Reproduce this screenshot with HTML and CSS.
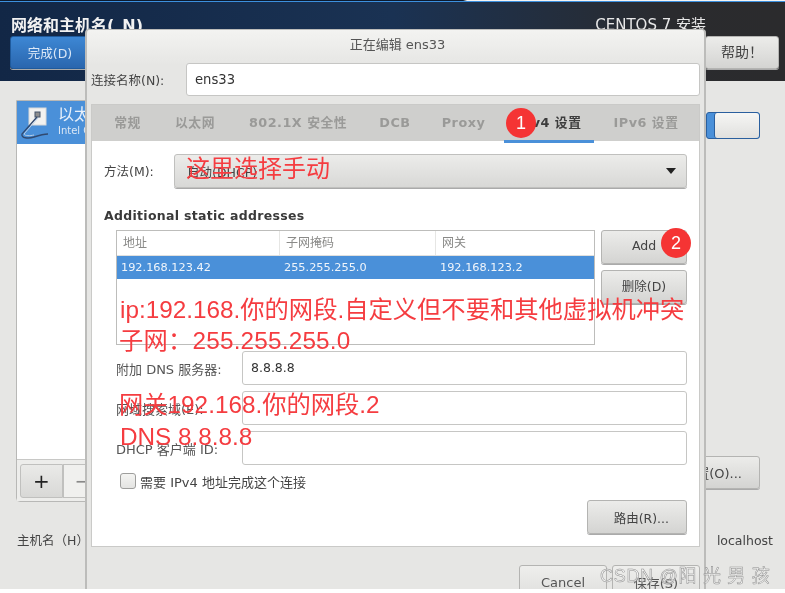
FILE: index.html
```html
<!DOCTYPE html>
<html lang="zh">
<head>
<meta charset="utf-8">
<title>网络和主机名</title>
<link rel="stylesheet" href="styles.css">
</head>
<body>
<div class="app">
  <header class="topbar">
    <div class="topbar-col">
      <div class="title">网络和主机名(_N)</div>
      <button class="btn btn-primary">完成(D)</button>
    </div>
    <div class="topbar-col topbar-right">
      <div class="product">CENTOS 7 安装</div>
      <button class="btn btn-help">帮助！</button>
    </div>
  </header>

  <main class="page">
    <section class="devices">
      <div class="device-list">
        <div class="device-row">
          <svg class="device-icon" width="36" height="36" viewBox="0 0 36 36">
            <rect x="9" y="1" width="17" height="17" fill="#f2f2f0" stroke="#d8d8d8"/>
            <rect x="15" y="5" width="5" height="5" fill="#8d8d8d" stroke="#44546a" stroke-width="1"/>
            <path d="M17 10 L2 27 C1 31 8 32 14 30 C20 28 24 27 28 27" fill="none" stroke="#31496f" stroke-width="1.4"/>
            <path d="M18 11 L4 27 C5 29 10 29 14 28" fill="none" stroke="#b9cfe8" stroke-width="1"/>
          </svg>
          <div class="device-text">
            <div class="device-name">以太网 (ens33)</div>
            <div class="device-sub">Intel Corporation</div>
          </div>
        </div>
      </div>
      <div class="device-tools">
        <button class="tool tool-add">+</button>
        <button class="tool tool-remove">−</button>
      </div>
    </section>
    <section class="details">
      <div class="toggle"><span class="toggle-knob"></span></div>
      <button class="btn btn-config">配置(O)...</button>
    </section>
    <footer class="hostbar">
      <span>主机名（H）</span>
      <span class="hostname">localhost</span>
    </footer>
  </main>

  <div class="dialog">
    <div class="dialog-title">正在编辑 ens33</div>
    <div class="name-row">
      <label class="name-label">连接名称(N):</label>
      <div class="entry entry-name">ens33</div>
    </div>
    <div class="notebook">
      <div class="tabs">
        <div class="tab">常规</div>
        <div class="tab">以太网</div>
        <div class="tab">802.1X 安全性</div>
        <div class="tab">DCB</div>
        <div class="tab">Proxy</div>
        <div class="tab tab-active">IPv4 设置</div>
        <div class="tab">IPv6 设置</div>
      </div>
      <div class="tab-body">
        <div class="method-row">
          <span class="method-label">方法(M):</span>
          <div class="combo"><span>自动(DHCP)</span><i class="caret"></i></div>
        </div>
        <div class="section-title">Additional static addresses</div>
        <div class="addr-row">
          <div class="addr-table">
            <div class="addr-head">
              <span>地址</span><span>子网掩码</span><span>网关</span>
            </div>
            <div class="addr-sel">
              <span>192.168.123.42</span><span>255.255.255.0</span><span>192.168.123.2</span>
            </div>
          </div>
          <div class="addr-actions">
            <button class="btn btn-side">Add</button>
            <button class="btn btn-side">删除(D)</button>
          </div>
        </div>
        <div class="form-rows">
          <div class="form-row"><label>附加 DNS 服务器:</label><div class="entry">8.8.8.8</div></div>
          <div class="form-row"><label>网域搜索域(E):</label><div class="entry"></div></div>
          <div class="form-row"><label>DHCP 客户端 ID:</label><div class="entry"></div></div>
        </div>
        <div class="check-row"><span class="checkbox"></span><span>需要 IPv4 地址完成这个连接</span></div>
        <div class="route-row"><button class="btn btn-route">路由(R)...</button></div>
      </div>
    </div>
    <div class="dialog-actions">
      <button class="btn btn-cancel">Cancel</button>
      <button class="btn btn-save">保存(S)</button>
    </div>
  </div>

  <div class="note note-method">这里选择手动</div>
  <div class="note note-ip">ip:192.168.你的网段.自定义但不要和其他虚拟机冲突</div>
  <div class="note note-mask">子网：255.255.255.0</div>
  <div class="note note-gw">网关192.168.你的网段.2</div>
  <div class="note note-dns">DNS 8.8.8.8</div>
  <div class="badge badge-one">1</div>
  <div class="badge badge-two">2</div>
  <div class="watermark">CSDN @阳 光 男 孩</div>
</div>
</body>
</html>
```
FILE: styles.css
```css
* { box-sizing: border-box; }
html, body { margin: 0; padding: 0; background: #fff; }
body { width: 785px; height: 593px; overflow: hidden; }
.app {
  position: relative;
  width: 785px;
  height: 589px;
  overflow: hidden;
  padding-top: 1px;
  background: linear-gradient(90deg, #0c1a2e 59%, #f4f4f4 59.5%);
  font: 13px "DejaVu Sans", "Noto Sans CJK SC", sans-serif;
  color: #3a3a3a;
  filter: blur(.55px);
}
button { font: inherit; color: inherit; padding: 0; }

.btn {
  display: block;
  border: 1px solid #b4b4b2;
  border-radius: 3px;
  background: linear-gradient(#ececea, #d4d4d2);
  box-shadow: 0 1px 0 #aaa;
}

.topbar {
  height: 80px;
  display: flex;
  justify-content: space-between;
  border-top: 1px solid #3c90de;
  background: linear-gradient(90deg, #122746 0%, #1a3253 50%, #2a2b2e 85%, #2b2b2d 100%);
  padding: 0 6px 0 10px;
}
.topbar-col { display: flex; flex-direction: column; }
.topbar-right { align-items: flex-end; }
.title { height: 34px; padding: 15px 0 0 1px; font-size: 16px; line-height: 18px; font-weight: 700; color: #f2f2f2; white-space: nowrap; }
.product { height: 34px; padding: 14px 73px 0 0; font-size: 15px; line-height: 18px; color: #e8e8e8; white-space: nowrap; }
.btn-primary { width: 80px; height: 33px; font-size: 12.5px; color: #dbe8f7; border-color: #1f5a9c; background: linear-gradient(#3d87d4, #2a66ae); }
.btn-help { width: 74px; height: 33px; padding-bottom: 3px; font-size: 14px; color: #444; }

.page {
  position: relative;
  height: 508px;
  background: #e6e6e4;
  display: grid;
  grid-template-columns: 1fr 1fr;
  grid-template-rows: 433px 1fr;
  padding: 19px 12px 0 16px;
}
.devices { display: flex; flex-direction: column; width: 200px; height: 402px; border: 1px solid #b8b8b6; border-radius: 0 0 4px 4px; background: #fff; }
.device-list { flex: 1; }
.device-row { height: 43px; background: #4a90d9; display: flex; color: #fff; }
.device-icon { margin: 6px 0 0 3px; flex: none; }
.device-text { padding: 3px 0 0 2px; }
.device-name { font-size: 16px; line-height: 21px; color: #e8f0fa; white-space: nowrap; }
.device-sub { font-size: 10px; line-height: 12px; color: #dbe7f5; white-space: nowrap; }
.device-tools { height: 42px; padding: 4px 3px; display: flex; background: #ededeb; border-top: 1px solid #c8c8c6; }
.tool { height: 34px; border: 1px solid #c0c0be; background: linear-gradient(#eaeae8, #d8d8d6); font-size: 20px; }
.tool-add { width: 43px; border-radius: 3px 0 0 3px; color: #222; }
.tool-remove { width: 40px; background: #f0f0ee; color: #888; }
.details { display: flex; flex-direction: column; align-items: flex-end; padding-right: 13px; }
.toggle { width: 54px; height: 27px; margin: 12px 0 0; border: 1px solid #2a5f9e; border-radius: 3px; background: #4a90d9; display: flex; justify-content: flex-end; }
.toggle-knob { width: 45px; height: 25px; background: linear-gradient(#f6f6f4, #e0e0de); border-radius: 3px; border-left: 1px solid #2a5f9e; }
.btn-config { width: 100px; height: 33px; margin-top: 317px; color: #444; text-align: right; padding-right: 17px; }
.hostbar { grid-column: 1 / 3; display: flex; justify-content: space-between; padding: 0 0 0 1px; height: 20px; line-height: 16px; font-size: 12.5px; color: #444; }

.dialog {
  position: absolute;
  left: 85px;
  top: 29px;
  width: 621px;
  height: 600px;
  background: linear-gradient(#f3f3f1 0, #e6e6e4 35px);
  border: 1px solid #bcbcba;
  border-width: 1px 2px 0 2px;
  border-radius: 4px 4px 0 0;
  padding: 0 4px;
}
.dialog-title { height: 33px; padding-left: 4px; text-align: center; line-height: 30px; font-size: 13px; color: #555; }
.name-row { display: flex; align-items: center; height: 33px; }
.name-label { width: 95px; white-space: nowrap; font-size: 12.5px; color: #444; }
.entry { flex: 1; height: 34px; background: #fff; border: 1px solid #c6c6c4; border-radius: 3px; padding: 0 8px; line-height: 32px; color: #333; font-size: 12.5px; }
.entry-name { height: 33px; font-size: 13.2px; padding-left: 8px; }
.notebook { margin-top: 8px; height: 443px; width: 609px; border: 1px solid #cacac8; background: #fff; }
.tabs { height: 36px; display: grid; grid-template-columns: 67px 68px 138px 56px 81px 90px 104px; padding-left: 2px; background: #cfcfcd; font-weight: 700; font-size: 12.8px; letter-spacing: .5px; color: #9a9a98; }
.tab { text-align: center; line-height: 36px; white-space: nowrap; }
.tab-active { color: #3d3d3d; border-bottom: 3px solid #4a90d9; height: 38px; }
.tab-body { padding: 13px 12px 0 12px; }
.method-row { display: flex; align-items: center; height: 34px; }
.method-label { width: 70px; margin-top: -2px; font-size: 12.5px; color: #444; }
.combo { flex: 1; height: 34px; display: flex; justify-content: space-between; align-items: center; padding: 0 10px 0 12px; border: 1px solid #c0c0be; border-radius: 3px; background: linear-gradient(#ececea, #d8d8d6); box-shadow: 0 1px 0 #aaa; color: #444; font-size: 12.5px; }
.caret { width: 0; height: 0; border: 5px solid transparent; border-top: 6px solid #222; border-bottom: 0; }
.section-title { margin-top: 20px; font-weight: 700; font-size: 12.5px; line-height: 16px; letter-spacing: .3px; color: #3a3a3a; }
.addr-row { display: flex; margin: 6px 0 0 12px; height: 115px; }
.addr-table { width: 479px; border: 1px solid #bdbdbb; background: #fff; }
.addr-head, .addr-sel { display: grid; grid-template-columns: 163px 156px 1fr; }
.addr-head { height: 25px; line-height: 24px; color: #8a8a88; font-size: 12px; border-bottom: 1px solid #e0e0de; }
.addr-head span { padding-left: 6px; border-right: 1px solid #e6e6e4; }
.addr-head span:last-child { border-right: 0; }
.addr-sel { height: 23px; line-height: 23px; background: #4a90d9; color: #f0f5fb; font-size: 11.3px; }
.addr-sel span { padding-left: 4px; }
.addr-actions { margin-left: 6px; display: flex; flex-direction: column; gap: 6px; }
.btn-side { width: 86px; height: 34px; padding-bottom: 3px; font-size: 12.5px; text-align: center; color: #444; }
.form-rows { margin: 6px 0 0 12px; display: flex; flex-direction: column; gap: 6px; }
.form-row { display: flex; align-items: center; height: 34px; }
.form-row label { width: 126px; font-size: 13px; color: #555; white-space: nowrap; }
.check-row { display: flex; align-items: center; gap: 4px; margin: 8px 0 0 16px; height: 16px; font-size: 13px; color: #444; }
.checkbox { width: 16px; height: 16px; border: 1px solid #9e9e9c; border-radius: 3px; background: linear-gradient(#f4f4f2, #e4e4e2); }
.route-row { display: flex; justify-content: flex-end; margin-top: 11px; }
.btn-route { width: 100px; height: 34px; font-size: 12.5px; color: #444; text-align: right; padding-right: 17px; }
.dialog-actions { display: flex; justify-content: flex-end; gap: 5px; margin-top: 18px; width: 609px; }
.btn-cancel, .btn-save { width: 88px; height: 34px; font-size: 13px; background: linear-gradient(#eeeeec, #dededc); text-align: center; color: #555; }

.note { position: absolute; white-space: nowrap; color: #f53c40; font-family: "Liberation Sans", "Noto Sans CJK SC", sans-serif; font-size: 24.3px; line-height: 30px; }
.note-method { left: 186px; top: 154px; font-size: 24px; }
.note-ip { left: 120px; top: 295px; }
.note-mask { left: 119px; top: 326px; letter-spacing: .2px; }
.note-gw { left: 119px; top: 390px; }
.note-dns { left: 120px; top: 422px; }
.badge { position: absolute; width: 30px; height: 30px; border-radius: 50%; background: #f53434; color: #fff; text-align: center; font: 18px/30px "Liberation Sans", sans-serif; }
.badge-one { left: 506px; top: 108px; }
.badge-two { left: 661px; top: 228px; }
.watermark { position: absolute; left: 600px; top: 565px; font: 18px/22px "Liberation Sans", "Noto Sans CJK SC", sans-serif; letter-spacing: .7px; color: rgba(255,255,255,.55); -webkit-text-stroke: .5px #8c8c8c; white-space: nowrap; }
```
